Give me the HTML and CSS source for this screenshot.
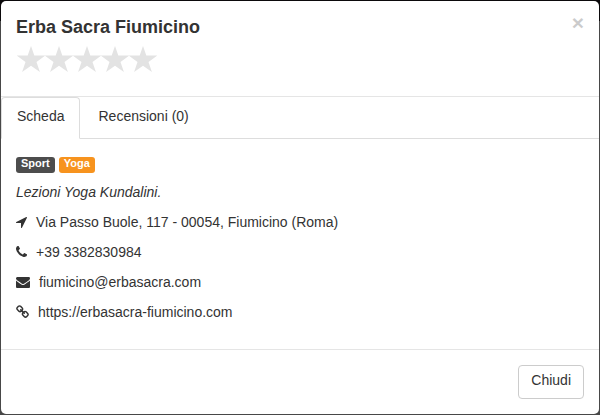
FILE: index.html
```html
<!DOCTYPE html>
<html lang="it">

<head>
    <meta charset="UTF-8" />
    <meta name="viewport" content="width=device-width, initial-scale=1" />
    <title>Erba Sacra Fiumicino</title>
    <link rel="stylesheet" href="styles.css">
</head>

<body>
    <svg class="sprite" aria-hidden="true">
        <symbol id="star" viewBox="0 0 28 26">
            <path d="M14 0l3.3 9.500H28.200l-8.700 6.400L22.900 26 14 19.800 5.100 26l3.400-10.100L-.2 9.500h10.900z" />
        </symbol>
    </svg>

    <div class="modal" role="dialog" aria-labelledby="modalTitle">
        <div class="modal-header">
            <div>
                <h4 id="modalTitle" class="modal-title">Erba Sacra Fiumicino</h4>
                <div class="rating" role="img" aria-label="0 stelle su 5">
                    <svg class="star"><use href="#star" /></svg>
                    <svg class="star"><use href="#star" /></svg>
                    <svg class="star"><use href="#star" /></svg>
                    <svg class="star"><use href="#star" /></svg>
                    <svg class="star"><use href="#star" /></svg>
                </div>
            </div>
            <button type="button" class="close" aria-label="Chiudi finestra">×</button>
        </div>

        <nav class="tabs">
            <a href="#scheda" class="tab active">Scheda</a>
            <a href="#recensioni" class="tab">Recensioni (0)</a>
        </nav>

        <div id="scheda" class="modal-body">
            <div class="labels">
                <span class="label label-dark">Sport</span>
                <span class="label label-orange">Yoga</span>
            </div>
            <p><em>Lezioni Yoga Kundalini.</em></p>
            <p class="contact">
                <svg class="icon icon-narrow" viewBox="192 0 1408 1792"><path d="M1593 349l-640 1280q-17 35-57 35-5 0-15-2-22-5-35.500-22.500t-13.500-39.500v-576h-576q-22 0-39.500-13.500t-22.500-35.500 4-42 29-30l1280-640q13-7 29-7 27 0 45 19 15 14 18.500 34.500t-6.500 39.500z" /></svg>
                Via Passo Buole, 117 - 00054, Fiumicino (Roma)
            </p>
            <p class="contact">
                <svg class="icon icon-narrow" viewBox="192 0 1408 1792"><path d="M1600 1240q0 27-10 70.500t-21 68.500q-21 50-122 106-94 51-186 51-27 0-52.500-3.500t-57.500-12.500-47.500-14.500-55.500-20.500-49-18q-98-35-175-83-128-79-264.500-215.500t-215.500-264.500q-48-77-83-175-3-9-18-49t-20.500-55.500-14.500-47.500-12.500-57.500-3.500-52.500q0-92 51-186 56-101 106-122 25-11 68.500-21t70.500-10q14 0 21 3 18 6 53 76 11 19 30 54t35 63.500 31 53.500q3 4 17.500 25t21.500 35.500 7 28.500q0 20-28.500 50t-62 55-62 53-28.500 46q0 9 5 22.500t8.500 20.500 14 24 11.500 19q76 137 174 235t235 174q2 1 19 11.500t24 14 20.500 8.500 22.500 5q18 0 46-28.500t53-62 55-62 50-28.500q14 0 28.500 7t35.500 21.500 25 17.500q25 15 53.500 31t63.500 35 54 30q70 35 76 53 3 7 3 21z" /></svg>
                +39 3382830984
            </p>
            <p class="contact">
                <svg class="icon" viewBox="0 0 1792 1792"><path d="M1792 710v794q0 66-47 113t-113 47h-1472q-66 0-113-47t-47-113v-794q44 49 101 87 362 246 497 345 57 42 92.500 65.500t94.500 48 110 24.500h2q51 0 110-24.500t94.500-48 92.500-65.500q170-123 498-345 57-39 100-87zm0-294q0 79-49 151t-122 123q-376 261-468 325-10 7-42.500 31t-54 38.500-52 32.500-57.500 27-50 9h-2q-23 0-50-9t-57.500-27-52-32.500-54-38.500-42.500-31q-91-64-262-182.500t-205-142.500q-62-42-117-115.500t-55-136.500q0-78 41.500-130t118.500-52h1472q65 0 112.500 47t47.500 113z" /></svg>
                fiumicino@erbasacra.com
            </p>
            <p class="contact">
                <svg class="icon icon-medium" viewBox="64 0 1664 1792"><path d="M1520 1216q0-40-28-68l-208-208q-28-28-68-28-42 0-72 32 3 3 19 18.500t21.500 21.500 15 19 13 25.500 3.500 27.500q0 40-28 68t-68 28q-15 0-27.500-3.500t-25.500-13-19-15-21.500-21.500-18.500-19q-33 31-33 73 0 40 28 68l206 207q27 27 68 27 40 0 68-26l147-146q28-28 28-67zm-703-705q0-40-28-68l-206-207q-28-28-68-28-39 0-68 27l-147 146q-28 28-28 67 0 40 28 68l208 208q27 27 68 27 42 0 72-31-3-3-19-18.500t-21.500-21.500-15-19-13-25.500-3.500-27.500q0-40 28-68t68-28q15 0 27.500 3.500t25.500 13 19 15 21.500 21.500 18.500 19q33-31 33-73zm895 705q0 120-85 203l-147 146q-83 83-203 83-121 0-204-85l-206-207q-83-83-83-203 0-123 88-209l-88-88q-86 88-208 88-120 0-204-84l-208-208q-84-84-84-204t85-203l147-146q83-83 203-83 121 0 204 85l206 207q83 83 83 203 0 123-88 209l88 88q86-88 208-88 120 0 204 84l208 208q84 84 84 204z" /></svg>
                https://erbasacra-fiumicino.com
            </p>
        </div>

        <div class="modal-footer">
            <button type="button" class="btn">Chiudi</button>
        </div>
    </div>
</body>

</html>
```

FILE: styles.css
```css
* {
    box-sizing: border-box;
}

body {
    margin: 0;
    padding: 1px;
    background: linear-gradient(#0b090b 21px, #484848 21px);
    font-family: "Liberation Sans", Arial, sans-serif;
    font-size: 14px;
    line-height: 20px;
    color: #333;
}

.sprite {
    display: none;
}

.modal {
    background: #fff;
    border-radius: 5px;
}

.modal-header {
    display: flex;
    justify-content: space-between;
    align-items: flex-start;
    padding: 14px 15px 22px;
    border-bottom: 1px solid #e5e5e5;
}

.modal-title {
    margin: 0 0 5px;
    font-size: 18px;
    line-height: 24px;
}

.rating {
    display: flex;
    padding: 2px 1px;
}

.star {
    width: 28px;
    height: 26px;
    fill: #e3e3e3;
    overflow: visible;
}

.close {
    padding: 0;
    border: 0;
    background: none;
    font-family: inherit;
    font-size: 21px;
    font-weight: bold;
    line-height: 16px;
    color: #000;
    opacity: 0.2;
    cursor: pointer;
}

.tabs {
    display: flex;
    gap: 2px;
    border-bottom: 1px solid #ddd;
}

.tab {
    margin-bottom: -1px;
    padding: 8px 15px 12px;
    border: 1px solid transparent;
    border-radius: 4px 4px 0 0;
    color: #333;
    text-decoration: none;
}

.tab.active {
    background: #fff;
    border-color: #ddd #ddd #fff;
}

.modal-body {
    padding: 18px 15px 17px;
}

.modal-body p {
    margin: 0 0 10px;
}

.labels {
    display: flex;
    gap: 4px;
    margin-bottom: 9px;
}

.label {
    padding: 0 5px 4px;
    border-radius: 3px;
    font-size: 11px;
    font-weight: bold;
    line-height: 12px;
    color: #fff;
}

.label-dark {
    background: #4d4d4d;
}

.label-orange {
    background: #f7931e;
}

.contact {
    display: flex;
    align-items: center;
    gap: 9px;
}

.icon {
    width: 14px;
    height: 14px;
    fill: #333;
}

.icon-narrow {
    width: 11px;
}

.icon-medium {
    width: 13px;
}

.modal-footer {
    display: flex;
    justify-content: flex-end;
    padding: 15px;
    border-top: 1px solid #e5e5e5;
}

.btn {
    padding: 4px 12px 8px;
    border: 1px solid #ccc;
    border-radius: 4px;
    background: #fff;
    font-family: inherit;
    font-size: 14px;
    line-height: 20px;
    color: #333;
    cursor: pointer;
}
```
